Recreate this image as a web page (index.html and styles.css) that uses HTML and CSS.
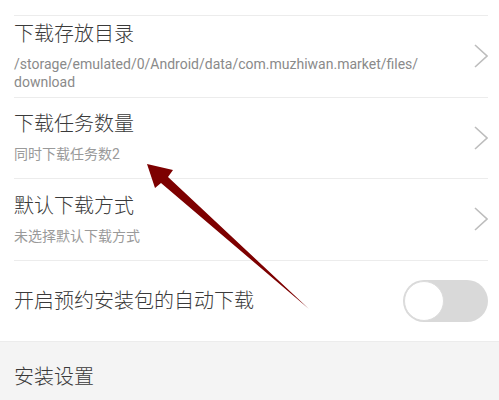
FILE: index.html
```html
<!DOCTYPE html>
<html lang="zh-CN">
<head>
    <meta charset="UTF-8">
    <meta name="viewport" content="width=device-width, initial-scale=1.0">
    <title>下载设置</title>
    <link rel="stylesheet" href="styles.css">
</head>
<body>
    <div class="page">
        <div class="top-spacer"></div>

        <div class="setting-row">
            <div class="setting-text">
                <div class="setting-title">下载存放目录</div>
                <div class="setting-sub path">/storage/emulated/0/Android/data/com.muzhiwan.market/files/ download</div>
            </div>
            <svg class="chevron" viewBox="0 0 14 24" width="14" height="24">
                <polyline points="1,1 13,12 1,23" fill="none" stroke="#bdbdbd" stroke-width="1.6"/>
            </svg>
        </div>

        <div class="setting-row">
            <div class="setting-text">
                <div class="setting-title">下载任务数量</div>
                <div class="setting-sub">同时下载任务数2</div>
            </div>
            <svg class="chevron" viewBox="0 0 14 24" width="14" height="24">
                <polyline points="1,1 13,12 1,23" fill="none" stroke="#bdbdbd" stroke-width="1.6"/>
            </svg>
        </div>

        <div class="setting-row">
            <div class="setting-text">
                <div class="setting-title">默认下载方式</div>
                <div class="setting-sub">未选择默认下载方式</div>
            </div>
            <svg class="chevron" viewBox="0 0 14 24" width="14" height="24">
                <polyline points="1,1 13,12 1,23" fill="none" stroke="#bdbdbd" stroke-width="1.6"/>
            </svg>
        </div>

        <div class="setting-row last">
            <div class="setting-text">
                <div class="setting-title">开启预约安装包的自动下载</div>
            </div>
            <div class="switch">
                <div class="knob"></div>
            </div>
        </div>

        <div class="section-header">安装设置</div>

        <!-- annotation arrow -->
        <svg class="annotation" width="499" height="400" viewBox="0 0 499 400">
            <polygon points="147,164 173,170 168,177 309,309 161,183 155,188" fill="#7d0000"/>
        </svg>
    </div>
</body>
</html>
```

FILE: styles.css
```css
* {
    box-sizing: border-box;
    margin: 0;
    padding: 0;
}

body {
    font-family: Roboto, "Noto Sans CJK SC", sans-serif;
    background: white;
    width: 499px;
    height: 400px;
    overflow: hidden;
}

.page {
    position: relative;
    height: 400px;
}

.top-spacer {
    height: 16px;
    margin: 0 11px 0 14px;
    border-bottom: 1px solid #ececec;
}

.setting-row {
    display: flex;
    align-items: center;
    min-height: 81.5px;
    margin: 0 11px 0 14px;
    border-bottom: 1px solid #ececec;
}

.setting-row.last {
    border-bottom: none;
    min-height: 80.5px;
}

.setting-text {
    flex-grow: 1;
    display: flex;
    flex-direction: column;
    gap: 9px;
}

.setting-title {
    font-size: 20px;
    line-height: 24px;
    font-weight: 300;
    color: #3a3a3a;
}

.setting-sub {
    font-size: 14px;
    line-height: 18px;
    color: #9a9a9a;
}

.setting-sub.path {
    color: #8a8a8a;
    padding-right: 50px;
}

.chevron {
    flex-shrink: 0;
}

.switch {
    flex-shrink: 0;
    width: 85px;
    height: 42px;
    border-radius: 21px;
    background: #d9d9d9;
    padding: 1px;
}

.knob {
    width: 40px;
    height: 40px;
    border-radius: 50%;
    background: white;
    border: 1px solid #dcdcdc;
}

.section-header {
    background: #f4f4f4;
    border-top: 1px solid #ececec;
    height: 60px;
    padding: 23px 14px 0;
    font-size: 20px;
    line-height: 24px;
    font-weight: 300;
    color: #3a3a3a;
}

.annotation {
    position: absolute;
    top: 0;
    left: 0;
    pointer-events: none;
}
```
